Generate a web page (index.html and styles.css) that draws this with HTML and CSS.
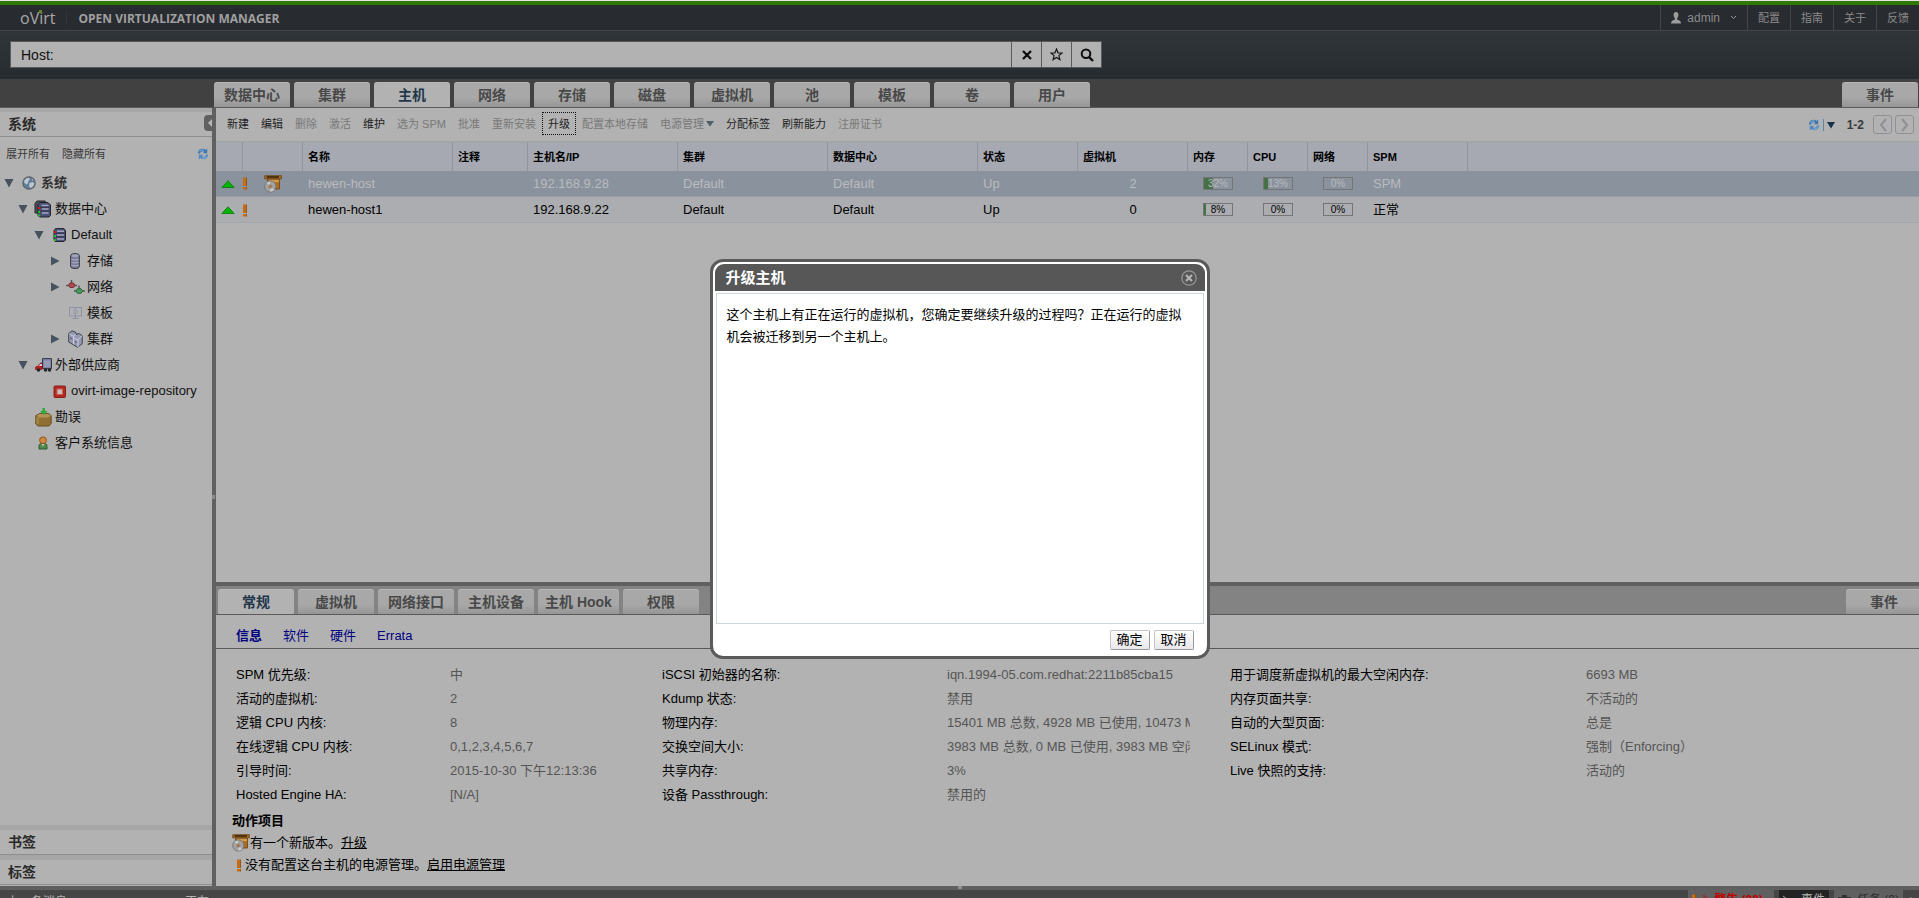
FILE: index.html
```html
<!DOCTYPE html>
<html lang="zh-CN">
<head>
<meta charset="utf-8">
<title>oVirt Open Virtualization Manager</title>
<link rel="stylesheet" href="styles.css">
</head>
<body>
<svg class="defs" aria-hidden="true">
  <symbol id="i-refresh" viewBox="0 0 12 12">
    <path d="M.8 5.600C1 2.600 3 .8 5.600.8c1.300 0 2.300.4 3 1.100L10.200.6v4.600H5.800l1.400-1.500C6 2.700 3.600 3.200 3 5.600z" fill="#3a78b4"/>
    <path d="M11.200 6.400c-.2 3-2.200 4.800-4.800 4.800-1.300 0-2.300-.4-3-1.100l-1.600 1.300V6.800h4.400L4.800 8.300c1.200 1 3.600.5 4.200-1.900z" fill="#4f8ac2"/>
    <path d="M2.500 3.500l2-1.500h2M9.500 8.500l-2 1.500h-2" stroke="#93b6d4" fill="none"/>
  </symbol>
  <symbol id="i-globe" viewBox="0 0 14 14">
    <circle cx="7" cy="7" r="6.200" fill="#5f7c98" stroke="#5f6368" stroke-width="1.200"/>
    <path d="M2 5l2-2.500 3-.7 1 1.200-1.500 2L6 7 4.500 8.500 2.500 7zM7.500 7l3-1 2 1.500-1.500 3L8.500 12 7 10zM9.500 2.500l2 1.500-1 .7z" fill="#bcc7cf"/>
  </symbol>
  <symbol id="i-dcs" viewBox="0 0 18 18">
    <path d="M1 3.500L3 1h8l1.500 2V13H1z" fill="#4b4d53" stroke="#26282e"/>
    <path d="M4 4.500L6 2.500h8L16.500 5v10.500L15 17H5.500L4 15.500z" fill="#4d5176" stroke="#22242e"/>
    <path d="M7.500 5.500h7M8 9h6.500M8 13h6.500" stroke="#a3a6c2" stroke-width="1.500"/>
    <path d="M6 7.200h9.500M6 11h9.500" stroke="#2e3048"/>
    <rect x="4" y="7" width="2" height="2" fill="#d8100c"/><rect x="4" y="11" width="2" height="2" fill="#14c814"/><rect x="4" y="14.500" width="2" height="2" fill="#14c814"/>
  </symbol>
  <symbol id="i-dc" viewBox="0 0 13 14">
    <path d="M1 2.500L2.500.6h8.500L12.500 2.500V12L11 13.500H2L1 12z" fill="#4d5176" stroke="#22242e"/>
    <path d="M4 3.300h7M4 7h7M4 11h7" stroke="#a3a6c2" stroke-width="1.500"/>
    <path d="M3 5.200h9M3 9h9" stroke="#2e3048"/>
    <rect x="1" y="3" width="2" height="2" fill="#d8100c"/><rect x="1" y="7" width="2" height="2" fill="#14c814"/><rect x="1" y="11" width="2" height="2" fill="#14c814"/>
  </symbol>
  <symbol id="i-disk" viewBox="0 0 10 16">
    <path d="M.7 2.500v11c0 2.600 8.600 2.600 8.600 0v-11c0-2.500-8.600-2.500-8.600 0z" fill="#7a7c98" stroke="#30323e"/>
    <ellipse cx="5" cy="2.700" rx="3.600" ry="1.400" fill="#a2a5bb"/>
    <path d="M1.200 6c1.500 1.300 6 1.300 7.600 0M1.200 9c1.500 1.300 6 1.300 7.600 0M1.200 12c1.500 1.300 6 1.300 7.600 0" stroke="#b4b6c8" fill="none"/>
  </symbol>
  <symbol id="i-net" viewBox="0 0 19 14">
    <path d="M0 5.500h11M5.500 0v3M8 11h11M13 5.500v3" stroke="#55585a" stroke-width="1.500"/>
    <path d="M2.500 5.500L4 3h3.500L9 5.500 7.500 7.500H4z" fill="#b04a4c" stroke="#7c2c30"/>
    <path d="M10 11l1.500-2.300H15L16.500 11 15 13.300h-3.500z" fill="#4a9e5c" stroke="#246a34"/>
  </symbol>
  <symbol id="i-tmpl" viewBox="0 0 13 12">
    <path d="M.5.5h12v8.500H.5zM6.500.5V9M6.500 9v2M3.500 11.500h6" fill="none" stroke="#8f91a6"/>
    <path d="M5 2.500v4.500l4-2.200z" fill="#b2b2b8" stroke="#8f91a6" stroke-width=".7"/>
  </symbol>
  <symbol id="i-cluster" viewBox="0 0 15 18">
    <path d="M.7 3.500L4 .8 8 2.500v2L11 3.500l3.200 2.300v8L9.500 17.300.7 12z" fill="#9699b2" stroke="#3f4252"/>
    <path d="M1 4l4.500 2.200v8M5.500 6L8 4.500M6 8l4 2v7M10 9.500L14 6" fill="none" stroke="#c9cbe0"/>
    <path d="M2 8l2.500 1M7 11.500l2 1" stroke="#55586e"/>
  </symbol>
  <symbol id="i-truck" viewBox="0 0 17 14">
    <path d="M7.500.6h9v10h-9z" fill="#7f84a4" stroke="#34374a"/>
    <path d="M9 2.500h6v6.500H9z" fill="#979bb8"/>
    <path d="M.5 11.500V9L3 8l2.500-3H7v6.500z" fill="#c01c22" stroke="#7a1418" stroke-width=".6"/>
    <path d="M3.500 8l2-2H7v2z" fill="#cfd2da"/>
    <circle cx="3.500" cy="12" r="1.800" fill="#26282c"/><circle cx="10.500" cy="12" r="1.800" fill="#26282c"/><circle cx="14.500" cy="12" r="1.800" fill="#26282c"/>
  </symbol>
  <symbol id="i-repo" viewBox="0 0 13 13">
    <rect x="1" y="1" width="11.500" height="11.500" rx="1" fill="#b02a22" stroke="#8d1f1a"/>
    <rect x="4" y="4" width="5.500" height="5.500" fill="#c4bfbf" stroke="#d0584c"/>
  </symbol>
  <symbol id="i-box" viewBox="0 0 17 19">
    <path d="M.8 7.500L5 5.500h8.500L16.200 7.500v8L14 18H3L.8 16z" fill="#8f6f34" stroke="#6b5024"/>
    <path d="M1.500 7.500L5 6h8l2.800 1.500L13 9.500H4z" fill="#b39355"/>
    <path d="M1.500 8.500l2.500 1.500v7l-2.500-1.500z" fill="#a58345"/>
    <path d="M7.500 0h2.500v3h2.500L8.800 7 5 3h2.500z" fill="#2fa838"/>
  </symbol>
  <symbol id="i-guest" viewBox="0 0 10 14">
    <path d="M1 13V9.500C1 8 3 7.500 5 7.500s4 .5 4 2V13z" fill="#4f8a4c" stroke="#2f5a2e"/>
    <path d="M3.500 8L5 10.500 6.500 8z" fill="#c8c4b0"/>
    <circle cx="5" cy="4.300" r="3.400" fill="#d08a40" stroke="#8f5418"/>
  </symbol>
  <symbol id="i-upgrade" viewBox="0 0 18 18">
    <path d="M.8.8h16.500v3H.8z" fill="#b87a2c" stroke="#6e4514"/>
    <path d="M2.500 1.200h12.500v1.600h-12.500z" fill="#3d260a"/>
    <path d="M3.500 4.200h12V14H3.500z" fill="#a86c24" stroke="#7c4e18"/>
    <path d="M5 4.800h10v2.400H5z" fill="#cf9a4c"/>
    <circle cx="6.300" cy="11.500" r="5.600" fill="#a3a3a3" stroke="#767676"/>
    <path d="M6.300 11.500L2.500 8A5.200 5.200 0 0 1 6 6.500zM6.300 11.500l4 3.500a5.200 5.200 0 0 1-4 1.800z" fill="#c9c9c9"/>
    <circle cx="6.300" cy="11.500" r="2.200" fill="#8f8f8f"/><circle cx="6.300" cy="11.500" r="1.200" fill="#b5701f"/>
  </symbol>
  <symbol id="i-warn" viewBox="0 0 4 13">
    <path d="M0 .5h3.500v8.500H0zM0 10h3.500v2.500H0z" fill="#c56c14"/><path d="M3.500.5v8.500M3.500 10v2.500" stroke="#8c4c0c" stroke-width=".8"/>
  </symbol>
  <symbol id="i-up" viewBox="0 0 14 8">
    <path d="M.8 7.500L7 .8l6.200 6.700z" fill="#02b402" stroke="#0a7a0a" stroke-width=".8"/>
  </symbol>
  <symbol id="i-down" viewBox="0 0 10 10"><path d="M.5 1h9L5 9.500z" fill="#47525f"/></symbol>
  <symbol id="i-right" viewBox="0 0 10 10"><path d="M1 .5v9L9.500 5z" fill="#47525f"/></symbol>
</svg>

<header class="top">
  <div class="brand-row">
    <span class="logo">oVirt<i></i></span>
    <span class="product">OPEN VIRTUALIZATION MANAGER</span>
    <nav class="user-nav">
      <a href="#" class="user">
        <svg width="10" height="12" viewBox="0 0 10 12"><path d="M5 0C3.400 0 2.600 1.200 2.600 2.800S3.400 6 4 6.600v1C2 8.300 0 9 0 11.500h10C10 9 8 8.300 6 7.600v-1c.6-.6 1.400-2.200 1.400-3.800S6.600 0 5 0z" fill="#9c9c9c"/></svg>
        admin
        <svg width="7" height="5" viewBox="0 0 7 5"><path d="M1 1l2.500 2.500L6 1" fill="none" stroke="#9c9c9c"/></svg>
      </a>
      <a href="#">配置</a><a href="#">指南</a><a href="#">关于</a><a href="#">反馈</a>
    </nav>
  </div>
  <form class="search">
    <input type="text" value="Host:" aria-label="搜索">
    <button type="button" aria-label="清除"><svg width="10" height="10" viewBox="0 0 10 10"><path d="M1 1l8 8M9 1L1 9" stroke="#0c0c0c" stroke-width="2.200"/></svg></button>
    <button type="button" aria-label="书签"><svg width="13" height="13" viewBox="0 0 13 13"><path d="M6.500 1l1.500 3.800 4 .2-3.100 2.600 1 4L6.500 9.400 3.100 11.600l1-4L1 5l4-.2z" fill="none" stroke="#1a1a1a" stroke-width="1.200"/></svg></button>
    <button type="button" aria-label="搜索"><svg width="14" height="14" viewBox="0 0 14 14"><circle cx="6" cy="5.800" r="4.300" fill="none" stroke="#0c0c0c" stroke-width="2"/><path d="M9 9l4 4" stroke="#0c0c0c" stroke-width="2.400"/></svg></button>
  </form>
  <nav class="tabs main-tabs">
    <a href="#">数据中心</a><a href="#">集群</a><a href="#" class="on">主机</a><a href="#">网络</a><a href="#">存储</a><a href="#">磁盘</a><a href="#">虚拟机</a><a href="#">池</a><a href="#">模板</a><a href="#">卷</a><a href="#">用户</a><a href="#" class="end">事件</a>
  </nav>
</header>

<div class="work">
  <aside class="side">
    <h2>系统</h2>
    <button class="collapse" type="button" aria-label="折叠"><svg width="4" height="8" viewBox="0 0 4 8"><path d="M4 0v8L0 4z" fill="#b8b8b8"/></svg></button>
    <div class="tree-tools">
      <a href="#">展开所有</a><a href="#">隐藏所有</a>
      <svg class="push" width="12" height="12"><use href="#i-refresh"/></svg>
    </div>
    <ul class="tree">
      <li class="l0"><span class="arrow"><svg width="10" height="10"><use href="#i-down"/></svg></span><span class="ico"><svg width="14" height="14"><use href="#i-globe"/></svg></span><b>系统</b></li>
      <li class="l1"><span class="arrow"><svg width="10" height="10"><use href="#i-down"/></svg></span><span class="ico"><svg width="18" height="18"><use href="#i-dcs"/></svg></span>数据中心</li>
      <li class="l2"><span class="arrow"><svg width="10" height="10"><use href="#i-down"/></svg></span><span class="ico"><svg width="13" height="14"><use href="#i-dc"/></svg></span>Default</li>
      <li class="l3"><span class="arrow"><svg width="10" height="10"><use href="#i-right"/></svg></span><span class="ico"><svg width="10" height="16"><use href="#i-disk"/></svg></span>存储</li>
      <li class="l3"><span class="arrow"><svg width="10" height="10"><use href="#i-right"/></svg></span><span class="ico"><svg width="19" height="14"><use href="#i-net"/></svg></span>网络</li>
      <li class="l3"><span class="arrow"></span><span class="ico"><svg width="13" height="12"><use href="#i-tmpl"/></svg></span>模板</li>
      <li class="l3"><span class="arrow"><svg width="10" height="10"><use href="#i-right"/></svg></span><span class="ico"><svg width="15" height="18"><use href="#i-cluster"/></svg></span>集群</li>
      <li class="l1"><span class="arrow"><svg width="10" height="10"><use href="#i-down"/></svg></span><span class="ico"><svg width="17" height="14"><use href="#i-truck"/></svg></span>外部供应商</li>
      <li class="l2"><span class="arrow"></span><span class="ico"><svg width="13" height="13"><use href="#i-repo"/></svg></span>ovirt-image-repository</li>
      <li class="l1"><span class="arrow"></span><span class="ico"><svg width="17" height="19"><use href="#i-box"/></svg></span>勘误</li>
      <li class="l1"><span class="arrow"></span><span class="ico"><svg width="10" height="14"><use href="#i-guest"/></svg></span>客户系统信息</li>
    </ul>
    <h2>书签</h2>
    <h2>标签</h2>
  </aside>
  <div class="vsplit"><i></i></div>

  <main class="main">
    <section class="list">
      <div class="toolbar">
        <button type="button">新建</button><button type="button">编辑</button><button type="button" disabled>删除</button><button type="button" disabled>激活</button><button type="button">维护</button><button type="button" disabled>选为 SPM</button><button type="button" disabled>批准</button><button type="button" disabled>重新安装</button><button type="button" class="focus">升级</button><button type="button" disabled>配置本地存储</button><button type="button" disabled>电源管理<svg width="10" height="6" viewBox="0 0 10 6"><path d="M2 0h8L6 5.500z" fill="#4d5f6c"/></svg></button><button type="button">分配标签</button><button type="button">刷新能力</button><button type="button" disabled>注册证书</button>
        <div class="pager">
          <svg width="12" height="12"><use href="#i-refresh"/></svg>
          <svg class="drop" width="12" height="12" viewBox="0 0 12 12"><path d="M.5 0v12" stroke="#5a86b0"/><path d="M4 3h8L8 9.500z" fill="#16304a"/></svg>
          <b>1-2</b>
          <button type="button" aria-label="上一页"><svg width="10" height="14" viewBox="0 0 10 14"><path d="M8 1L3 7l5 6" fill="none" stroke="#8f8f94" stroke-width="2"/></svg></button>
          <button type="button" aria-label="下一页"><svg width="10" height="14" viewBox="0 0 10 14"><path d="M2 1l5 6-5 6" fill="none" stroke="#8f8f94" stroke-width="2"/></svg></button>
        </div>
      </div>
      <table class="grid">
        <colgroup><col class="c27"><col class="c60"><col class="c150"><col class="c75"><col class="c150"><col class="c150"><col class="c150"><col class="c100"><col class="c110"><col class="c60"><col class="c60"><col class="c60"><col class="c100"><col></colgroup>
        <thead><tr><th></th><th></th><th>名称</th><th>注释</th><th>主机名/IP</th><th>集群</th><th>数据中心</th><th>状态</th><th>虚拟机</th><th>内存</th><th>CPU</th><th>网络</th><th>SPM</th><th></th></tr></thead>
        <tbody>
          <tr class="sel"><td class="state"><svg width="14" height="8"><use href="#i-up"/></svg></td><td class="flags"><svg width="4" height="13"><use href="#i-warn"/></svg><svg class="up" width="18" height="18"><use href="#i-upgrade"/></svg></td><td>hewen-host</td><td></td><td>192.168.9.28</td><td>Default</td><td>Default</td><td>Up</td><td class="mid">2</td><td class="mid"><span class="bar"><i style="width:32%"></i><em>32%</em></span></td><td class="mid"><span class="bar"><i style="width:13%"></i><em>13%</em></span></td><td class="mid"><span class="bar"><em>0%</em></span></td><td>SPM</td><td></td></tr>
          <tr><td class="state"><svg width="14" height="8"><use href="#i-up"/></svg></td><td class="flags"><svg width="4" height="13"><use href="#i-warn"/></svg></td><td>hewen-host1</td><td></td><td>192.168.9.22</td><td>Default</td><td>Default</td><td>Up</td><td class="mid">0</td><td class="mid"><span class="bar"><i style="width:8%"></i><em>8%</em></span></td><td class="mid"><span class="bar"><em>0%</em></span></td><td class="mid"><span class="bar"><em>0%</em></span></td><td>正常</td><td></td></tr>
        </tbody>
      </table>
    </section>

    <section class="detail">
      <nav class="tabs sub-tabs">
        <a href="#" class="on">常规</a><a href="#">虚拟机</a><a href="#">网络接口</a><a href="#">主机设备</a><a href="#">主机 Hook</a><a href="#">权限</a><a href="#" class="end">事件</a>
      </nav>
      <nav class="links"><a href="#" class="on">信息</a><a href="#">软件</a><a href="#">硬件</a><a href="#">Errata</a></nav>
      <div class="facts">
        <dl class="f1">
          <dt>SPM 优先级:</dt><dd>中</dd>
          <dt>活动的虚拟机:</dt><dd>2</dd>
          <dt>逻辑 CPU 内核:</dt><dd>8</dd>
          <dt>在线逻辑 CPU 内核:</dt><dd>0,1,2,3,4,5,6,7</dd>
          <dt>引导时间:</dt><dd>2015-10-30 下午12:13:36</dd>
          <dt>Hosted Engine HA:</dt><dd>[N/A]</dd>
        </dl>
        <dl class="f2">
          <dt>iSCSI 初始器的名称:</dt><dd>iqn.1994-05.com.redhat:2211b85cba15</dd>
          <dt>Kdump 状态:</dt><dd>禁用</dd>
          <dt>物理内存:</dt><dd>15401 MB 总数, 4928 MB 已使用, 10473 MB 空闲</dd>
          <dt>交换空间大小:</dt><dd>3983 MB 总数, 0 MB 已使用, 3983 MB 空闲</dd>
          <dt>共享内存:</dt><dd>3%</dd>
          <dt>设备 Passthrough:</dt><dd>禁用的</dd>
        </dl>
        <dl class="f3">
          <dt>用于调度新虚拟机的最大空闲内存:</dt><dd>6693 MB</dd>
          <dt>内存页面共享:</dt><dd>不活动的</dd>
          <dt>自动的大型页面:</dt><dd>总是</dd>
          <dt>SELinux 模式:</dt><dd>强制（Enforcing）</dd>
          <dt>Live 快照的支持:</dt><dd>活动的</dd>
        </dl>
      </div>
      <div class="actions">
        <h3>动作项目</h3>
        <p><svg width="18" height="18"><use href="#i-upgrade"/></svg><span>有一个新版本。<a href="#">升级</a></span></p>
        <p class="warn"><svg width="4" height="13"><use href="#i-warn"/></svg><span>没有配置这台主机的电源管理。<a href="#">启用电源管理</a></span></p>
      </div>
    </section>
  </main>
</div>

<div class="hsplit"><i></i></div>
<footer class="foot">
  <span class="last">上一条消息:</span><span class="msg">正在</span>
  <a href="#" class="alert"><svg width="4" height="13"><use href="#i-warn"/></svg><svg width="6" height="12" viewBox="0 0 6 12"><path d="M0 1h3l3 4-3 2z" fill="#8d3a34"/></svg>警告 (20)</a>
  <a href="#" class="events"><svg width="12" height="10" viewBox="0 0 12 10"><path d="M0 1l4 3h8M0 8h12" stroke="#a8a8a8" fill="none"/></svg>事件</a>
  <a href="#" class="tasks"><svg width="13" height="10" viewBox="0 0 13 10"><path d="M4 0h5v2h4v8H0V2h4z" fill="#333"/></svg>任务 (0)</a>
  <button type="button" aria-label="展开"><svg width="8" height="10" viewBox="0 0 8 10"><path d="M4 0l4 5H5.500v5h-3V5H0z" fill="#b0b0b0"/></svg></button>
</footer>

<div class="layer">
  <div class="dialog" role="dialog" aria-labelledby="dlg-title">
    <div class="dlg-head"><h1 id="dlg-title">升级主机</h1>
      <button type="button" aria-label="关闭"><svg width="16" height="16" viewBox="0 0 16 16"><circle cx="8" cy="8" r="7.200" fill="none" stroke="#9a9a9a" stroke-width="1.200"/><path d="M5 5l6 6M11 5l-6 6" stroke="#b4b4b4" stroke-width="2.200"/></svg></button>
    </div>
    <div class="dlg-body">这个主机上有正在运行的虚拟机，您确定要继续升级的过程吗？正在运行的虚拟机会被迁移到另一个主机上。</div>
    <div class="dlg-foot"><button type="button">确定</button><button type="button">取消</button></div>
  </div>
</div>
</body>
</html>
```
FILE: styles.css
```css
* { box-sizing: border-box; }
body {
  margin: 0;
  height: 100vh;
  overflow: hidden;
  display: flex;
  flex-direction: column;
  background: #b2b2b2;
  color: #000;
  font: 13px/16px "Liberation Sans", "Noto Sans CJK SC", sans-serif;
}
a { color: inherit; text-decoration: none; }
svg { display: block; flex: none; }
h1, h2, h3, p, ul, dl, dd { margin: 0; padding: 0; }
button { font: inherit; color: inherit; padding: 0; border: 0; background: none; }
.defs { position: absolute; width: 0; height: 0; }

/* header */
.top {
  flex: none;
  border-top: 1px solid #e6e6e6;
  background: #414141;
}
.brand-row {
  display: flex;
  align-items: center;
  height: 30px;
  border-top: 4px solid #2f7a05;
  border-bottom: 1px solid #43474c;
  background: #282b30;
}
.logo {
  position: relative;
  padding: 0 11px 0 20px;
  border-right: 1px solid #32353a;
  color: #a9a9a9;
  font: 16px/16px "Open Sans", sans-serif;
}
.logo i {
  position: absolute;
  right: 24px;
  top: 0;
  width: 3px;
  height: 3px;
  background: #5e8a1e;
}
.product {
  padding: 2px 0 0 11px;
  color: #a0a0a0;
  font: 700 12px/16px "Open Sans", sans-serif;
}
.user-nav {
  display: flex;
  align-self: stretch;
  margin-left: auto;
  color: #8a8a8a;
  font-size: 11px;
}
.user-nav a {
  display: flex;
  align-items: center;
  padding: 0 10px;
  border-left: 1px solid #43474c;
}
.user-nav .user { gap: 6px; font-size: 12px; }
.user svg + svg { margin-left: 4px; }
.search {
  display: flex;
  width: 100%;
  height: 48px;
  padding: 10px 0 11px 10px;
  background: linear-gradient(#30353a, #262c30);
}
.search input {
  width: 1002px;
  max-width: 60%;
  padding: 0 10px;
  border: 1px solid #5a5a5a;
  border-radius: 0;
  background: #b2b2b2;
  color: #111;
  font: 14px/20px "Liberation Sans", sans-serif;
}
.search button {
  display: flex;
  align-items: center;
  justify-content: center;
  width: 30px;
  border: 1px solid #5a5a5a;
  border-left: 0;
  background: #b2b2b2;
}

/* tabs */
.tabs { display: flex; gap: 4px; border-bottom: 1px solid #5a5a5a; }
.tabs a {
  min-width: 76px;
  padding: 0 7px;
  border-top: 1px solid #b8b8b8;
  border-radius: 3px 3px 0 0;
  background: linear-gradient(#a8a8a8 60%, #969696);
  color: #484848;
  font-weight: bold;
  font-size: 14px;
  line-height: 24px;
  text-align: center;
}
.tabs .on { background: #b2b2b2; color: #23374b; }
.tabs .end { margin-left: auto; }
.main-tabs { padding: 3px 1px 0 214px; }
.sub-tabs { padding: 3px 0 0 2px; background: #838383; }
.sub-tabs .end { margin-right: -3px; }

/* work area */
.work { flex: 1; display: flex; min-height: 0; }
.side {
  position: relative;
  display: flex;
  flex-direction: column;
  width: 212px;
  flex: none;
  padding-bottom: 1px;
}
.side h2 {
  padding-left: 8px;
  border-top: 5px solid #a6a6a6;
  border-bottom: 1px solid #8e8e8e;
  color: #2a2a2a;
  font-size: 14px;
  line-height: 24px;
}
.side h2:first-child { border-top-width: 4px; }
.collapse {
  position: absolute;
  right: 0;
  top: 7px;
  width: 8px;
  height: 16px;
  padding-left: 4px;
  border-radius: 4px 0 0 4px;
  background: #606060;
}
.tree-tools {
  display: flex;
  align-items: center;
  gap: 12px;
  height: 33px;
  padding: 0 3px 0 6px;
  color: #3a3a3a;
  font-size: 11px;
}
.push { margin-left: auto; }
.tree { flex: 1; list-style: none; color: #111; }
.tree li { display: flex; align-items: center; height: 26px; white-space: nowrap; }
.tree b { color: #333; }
.l0 { padding-left: 1px; }
.l1 { padding-left: 15px; }
.l2 { padding-left: 31px; }
.l3 { padding-left: 47px; }
.arrow { display: flex; justify-content: center; width: 16px; }
.ico { display: flex; justify-content: center; width: 24px; }
.vsplit { display: flex; align-items: center; width: 4px; flex: none; background: #606060; }
.vsplit i { width: 3px; height: 4px; background: #8c8c8c; }
.main { flex: 1; display: flex; flex-direction: column; min-width: 0; overflow: hidden; }
.list { flex: 1; border-bottom: 4px solid #606060; }

/* toolbar */
.toolbar {
  display: flex;
  align-items: center;
  height: 34px;
  padding: 0 5px 2px;
  border-bottom: 1px solid #a4a4a4;
  color: #222;
  font-size: 11px;
}
.toolbar > button { display: flex; align-items: center; height: 23px; padding: 0 6px; white-space: nowrap; }
.toolbar > button:disabled { color: #787878; }
.toolbar > .focus { padding: 0 5px; border: 1px dotted #111; }
.pager { display: flex; align-items: center; gap: 3px; margin-left: auto; padding-top: 2px; }
.pager b { margin: 0 6px 0 9px; color: #3a3a3a; font-size: 12px; }
.pager button {
  display: flex;
  align-items: center;
  justify-content: center;
  width: 19px;
  height: 19px;
  border: 1px solid #8f9096;
  border-radius: 3px;
}

/* host table */
.grid { width: 100%; table-layout: fixed; border-collapse: separate; border-spacing: 0; }
.c27 { width: 27px; }
.c60 { width: 60px; }
.c75 { width: 75px; }
.c100 { width: 100px; }
.c110 { width: 110px; }
.c150 { width: 150px; }
.grid th {
  height: 29px;
  padding: 0 5px;
  border-right: 1px solid #92959e;
  background: #a6a8b2;
  font-size: 11px;
  text-align: left;
}
.grid th:last-child { border-right: 0; }
.grid td {
  height: 26px;
  padding: 0 5px;
  border-bottom: 1px solid #a4a5a7;
  background: #acadb0;
  white-space: nowrap;
}
.grid .sel td { background: #8a929d; color: #b8bbbf; border-color: #9a9fa6; }
.grid .mid { text-align: center; }
.grid .flags { padding: 0; }
.flags svg { display: inline-block; vertical-align: middle; }
.flags .up { margin-left: 17px; }
.bar {
  position: relative;
  display: block;
  width: 30px;
  height: 13px;
  margin: 0 auto;
  border: 1px solid #757575;
  font-size: 10px;
  line-height: 12px;
}
.bar i { position: absolute; left: 0; top: 0; bottom: 0; background: #467046; }
.bar em { position: relative; font-style: normal; }

/* detail */
.detail { flex: none; height: 300px; }
.links {
  display: flex;
  align-items: center;
  gap: 21px;
  height: 34px;
  padding: 8px 20px 0;
  border-bottom: 1px solid #5a5a5a;
  color: #000080;
}
.links .on { font-weight: bold; }
.facts { display: flex; height: 161px; padding: 14px 20px 0; white-space: nowrap; }
.facts dl { display: grid; grid-auto-rows: 24px; align-content: start; line-height: 24px; }
.facts dd { overflow: hidden; color: #555; }
.facts .f1 { grid-template-columns: 214px 212px; }
.facts .f2 { grid-template-columns: 285px 243px; margin-right: 40px; }
.facts .f3 { grid-template-columns: 356px auto; }
.actions { padding-left: 16px; }
.actions h3 { font-size: 13px; line-height: 22px; }
.actions p { display: flex; align-items: center; line-height: 22px; }
.actions .warn { gap: 4px; padding-left: 5px; }
.actions a { text-decoration: underline; }

/* footer */
.hsplit { display: flex; justify-content: center; height: 4px; flex: none; background: #606060; }
.hsplit i { width: 4px; height: 3px; background: #909090; }
.foot {
  display: flex;
  align-items: flex-start;
  height: 8px;
  flex: none;
  overflow: hidden;
  background: #464646;
  color: #b2b2b2;
  font-size: 12px;
  line-height: 24px;
}
.last { width: 185px; padding-left: 7px; }
.msg { margin-right: auto; }
.foot a { display: flex; align-items: center; gap: 6px; height: 20px; padding: 0 12px; margin-right: 5px; background: #606060; color: #2c2c2c; }
.foot .alert { padding: 0 11px 0 4px; color: #c00000; font-weight: bold; }
.foot .events { padding: 0 4px; background: #222; color: #b2b2b2; }
.foot .tasks { padding: 0 4px; margin-right: 0; }
.foot button { width: 16px; height: 24px; padding: 0 4px; }

/* dialog */
.layer {
  position: absolute;
  inset: 0;
  display: flex;
  align-items: center;
  justify-content: center;
  padding-top: 20px;
}
.dialog {
  display: flex;
  flex-direction: column;
  width: 500px;
  height: 400px;
  padding: 2px;
  border: 3px solid #5a5a5a;
  border-radius: 13px;
  background: #fff;
}
.dlg-head {
  display: flex;
  align-items: center;
  justify-content: space-between;
  height: 27px;
  padding: 0 8px 0 11px;
  border-radius: 9px 9px 0 0;
  background: #575757;
  color: #fff;
}
.dlg-head h1 { font-size: 15px; line-height: 22px; }
.dlg-body {
  flex: 1;
  margin: 2px 1px 0;
  padding: 10px;
  border: 1px solid #ccd6dd;
  line-height: 22px;
}
.dlg-foot { display: flex; justify-content: flex-end; gap: 4px; padding: 6px 11px 4px; }
.dlg-foot button {
  width: 40px;
  height: 20px;
  border: 1px solid #c4c4c8;
  border-right-color: #9a9a9f;
  border-bottom-color: #9a9a9f;
  border-radius: 2px;
  background: linear-gradient(#fff, #e8e8ec);
  line-height: 16px;
}
```
